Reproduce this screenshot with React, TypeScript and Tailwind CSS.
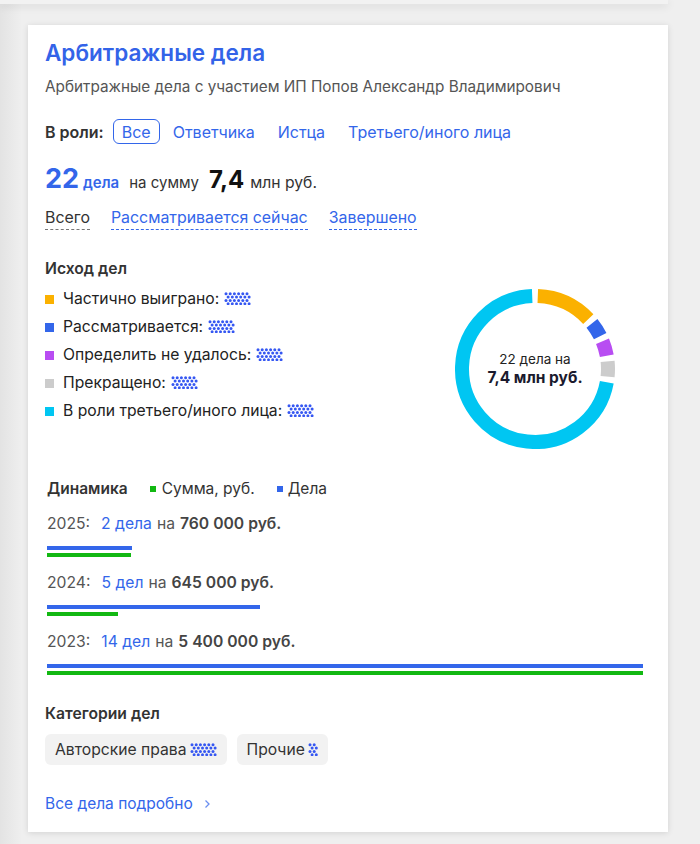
import React from "react";

function Dots({ cols = 6 }: { cols?: number }) {
  const dots: React.ReactNode[] = [];
  for (let r = 0; r < 4; r++) {
    for (let c = 0; c < cols; c++) {
      const x = 2 + c * 4.2 + (r % 2 === 0 ? 0 : 2.1);
      const y = 1.8 + r * 3.3;
      if (x > cols * 4.2) continue;
      dots.push(<circle key={`${r}-${c}`} cx={x} cy={y} r={1.5} fill="#3557f2" />);
    }
  }
  const w = Math.round(cols * 4.2 + 1.5);
  return (
    <svg width={w} height={13} viewBox={`0 0 ${w} 13`} className="inline-block align-[-1px]">
      {dots}
    </svg>
  );
}

const outcomes = [
  { label: "Частично выиграно:", color: "#fbb100", count: 3 },
  { label: "Рассматривается:", color: "#3366ea", count: 1 },
  { label: "Определить не удалось:", color: "#b84df2", count: 1 },
  { label: "Прекращено:", color: "#cccccc", count: 1 },
  { label: "В роли третьего/иного лица:", color: "#00c6f2", count: 16 },
];

function arc(cx: number, cy: number, r: number, a0: number, a1: number) {
  const p = (a: number) => {
    const rad = ((a - 90) * Math.PI) / 180;
    return [cx + r * Math.cos(rad), cy + r * Math.sin(rad)];
  };
  const [x0, y0] = p(a0);
  const [x1, y1] = p(a1);
  const large = a1 - a0 > 180 ? 1 : 0;
  return `M ${x0} ${y0} A ${r} ${r} 0 ${large} 1 ${x1} ${y1}`;
}

function Donut() {
  const total = outcomes.reduce((s, o) => s + o.count, 0);
  let start = 0;
  const gap = 2.2;
  return (
    <div className="relative w-[160px] h-[160px]">
      <svg width="160" height="160" viewBox="0 0 160 160">
        {outcomes.map((o) => {
          const a0 = start;
          const a1 = start + (o.count / total) * 360;
          start = a1;
          return (
            <path key={o.label} d={arc(80, 80, 73, a0 + gap, a1 - gap)} stroke={o.color} strokeWidth={14} fill="none" />
          );
        })}
      </svg>
      <div className="absolute inset-0 flex flex-col items-center justify-center">
        <div className="text-[13.5px] leading-[18px] text-[#222]">22 дела на</div>
        <div className="text-[15.5px] leading-[20px] font-bold text-[#1a1a2e]">7,4 млн руб.</div>
      </div>
    </div>
  );
}

const years = [
  { year: "2025", cases: "2 дела", n: 2, sum: "760 000 руб.", s: 760000 },
  { year: "2024", cases: "5 дел", n: 5, sum: "645 000 руб.", s: 645000 },
  { year: "2023", cases: "14 дел", n: 14, sum: "5 400 000 руб.", s: 5400000 },
];

export default function App() {
  const maxN = 14;
  const maxS = 5400000;
  return (
    <div className="min-h-[844px] bg-[linear-gradient(to_right,#e3e3e3,#efefef_22px)] font-['Inter',sans-serif] overflow-hidden">
      <div className="h-[4px] w-[668px] bg-[#f2f2f2] shadow-[0_2px_8px_rgba(0,0,0,0.12)]" />
      <div className="ml-[28px] mt-[21px] w-[640px] h-[807px] bg-white shadow-[0_1px_6px_rgba(0,0,0,0.12)] pl-[17px] pr-[25px] pt-[14px]">
        <h1 className="text-[22.5px] leading-[28px] font-semibold text-[#3363e8]">Арбитражные дела</h1>
        <p className="mt-[10px] text-[15.3px] leading-[20px] text-[#555]">
          Арбитражные дела с участием ИП Попов Александр Владимирович
        </p>

        <div className="mt-[22px] flex items-center text-[16px] leading-[22px]">
          <span className="font-semibold text-[#333] mr-[9px]">В роли:</span>
          <div className="flex items-center gap-[3px]">
            <span className="px-[8px] h-[25px] flex items-center rounded-[6px] border border-[#3366ea] text-[#3366ea]">Все</span>
            <span className="px-[10px] text-[#3366ea]">Ответчика</span>
            <span className="px-[10px] text-[#3366ea]">Истца</span>
            <span className="px-[10px] text-[#3366ea]">Третьего/иного лица</span>
          </div>
        </div>

        <div className="mt-[18px] flex items-baseline h-[32px]">
          <span className="text-[27px] leading-[32px] font-bold text-[#3366ea]">22</span>
          <span className="ml-[4px] text-[15px] font-semibold text-[#3366ea]">дела</span>
          <span className="ml-[10px] text-[15px] text-[#333]">на сумму</span>
          <span className="ml-[10px] text-[24px] font-bold text-[#111]">7,4</span>
          <span className="ml-[6px] text-[15.7px] text-[#333]">млн руб.</span>
        </div>

        <div className="mt-[13px] flex gap-[21px] text-[15.9px] leading-[22px]">
          <span className="text-[#333] border-b border-dashed border-[#777]">Всего</span>
          <span className="text-[#3366ea] border-b border-dashed border-[#3366ea]">Рассматривается сейчас</span>
          <span className="text-[#3366ea] border-b border-dashed border-[#3366ea]">Завершено</span>
        </div>

        <div className="mt-[28px] flex">
          <div>
            <h2 className="text-[15.7px] leading-[22px] font-semibold text-[#333]">Исход дел</h2>
            <ul className="mt-[5px]">
              {outcomes.map((o) => (
                <li key={o.label} className="h-[28px] flex items-center text-[15.7px] text-[#222]">
                  <span className="w-[9px] h-[9px] mr-[9px]" style={{ background: o.color }} />
                  <span>{o.label}</span>
                  <span className="ml-[5px]">
                    <Dots />
                  </span>
                </li>
              ))}
            </ul>
          </div>
          <div className="ml-auto mr-[28px] mt-[31px]">
            <Donut />
          </div>
        </div>

        <div className="mt-[29px] pl-[2px]">
          <div className="flex items-center text-[15.5px] leading-[22px]">
            <span className="font-semibold text-[#333]">Динамика</span>
            <span className="ml-[22px] w-[6px] h-[6px] bg-[#12b812]" />
            <span className="ml-[6px] text-[#333]">Сумма, руб.</span>
            <span className="ml-[22px] w-[6px] h-[6px] bg-[#3366ea]" />
            <span className="ml-[5px] text-[#333]">Дела</span>
          </div>

          {years.map((y, i) => (
            <div key={y.year} className={i === 0 ? "mt-[13px]" : "mt-[15px]"}>
              <div className="text-[15.7px] leading-[22px] text-[#555]">
                <span>{y.year}:</span>
                <span className="ml-[11px] text-[#3366ea]">{y.cases}</span>
                <span className="ml-[5px]">на</span>
                <span className="ml-[5px] font-semibold text-[#444]">{y.sum}</span>
              </div>
              <div className="mt-[11px] h-[4px] bg-[#3366ea]" style={{ width: `${(y.n / maxN) * 100}%` }} />
              <div className="mt-[3px] h-[4px] bg-[#12b812]" style={{ width: `${(y.s / maxS) * 100}%` }} />
            </div>
          ))}
        </div>

        <h2 className="mt-[28px] text-[15.7px] leading-[22px] font-semibold text-[#333]">Категории дел</h2>
        <div className="mt-[9px] flex gap-[10px]">
          <span className="h-[31px] px-[10px] flex items-center gap-[3px] rounded-[6px] bg-[#f2f2f2] text-[15.7px] text-[#333]">
            Авторские права <Dots />
          </span>
          <span className="h-[31px] px-[10px] flex items-center gap-[3px] rounded-[6px] bg-[#f2f2f2] text-[15.7px] text-[#333]">
            Прочие <Dots cols={2} />
          </span>
        </div>

        <a className="mt-[29px] flex items-center text-[15.5px] leading-[20px] text-[#3366ea]">
          Все дела подробно
          <svg width="12" height="12" viewBox="0 0 12 12" className="ml-[8px]">
            <path d="M4.5 2.5 L8 6 L4.5 9.5" stroke="#6b8ff0" strokeWidth="1.3" fill="none" />
          </svg>
        </a>
      </div>
    </div>
  );
}
